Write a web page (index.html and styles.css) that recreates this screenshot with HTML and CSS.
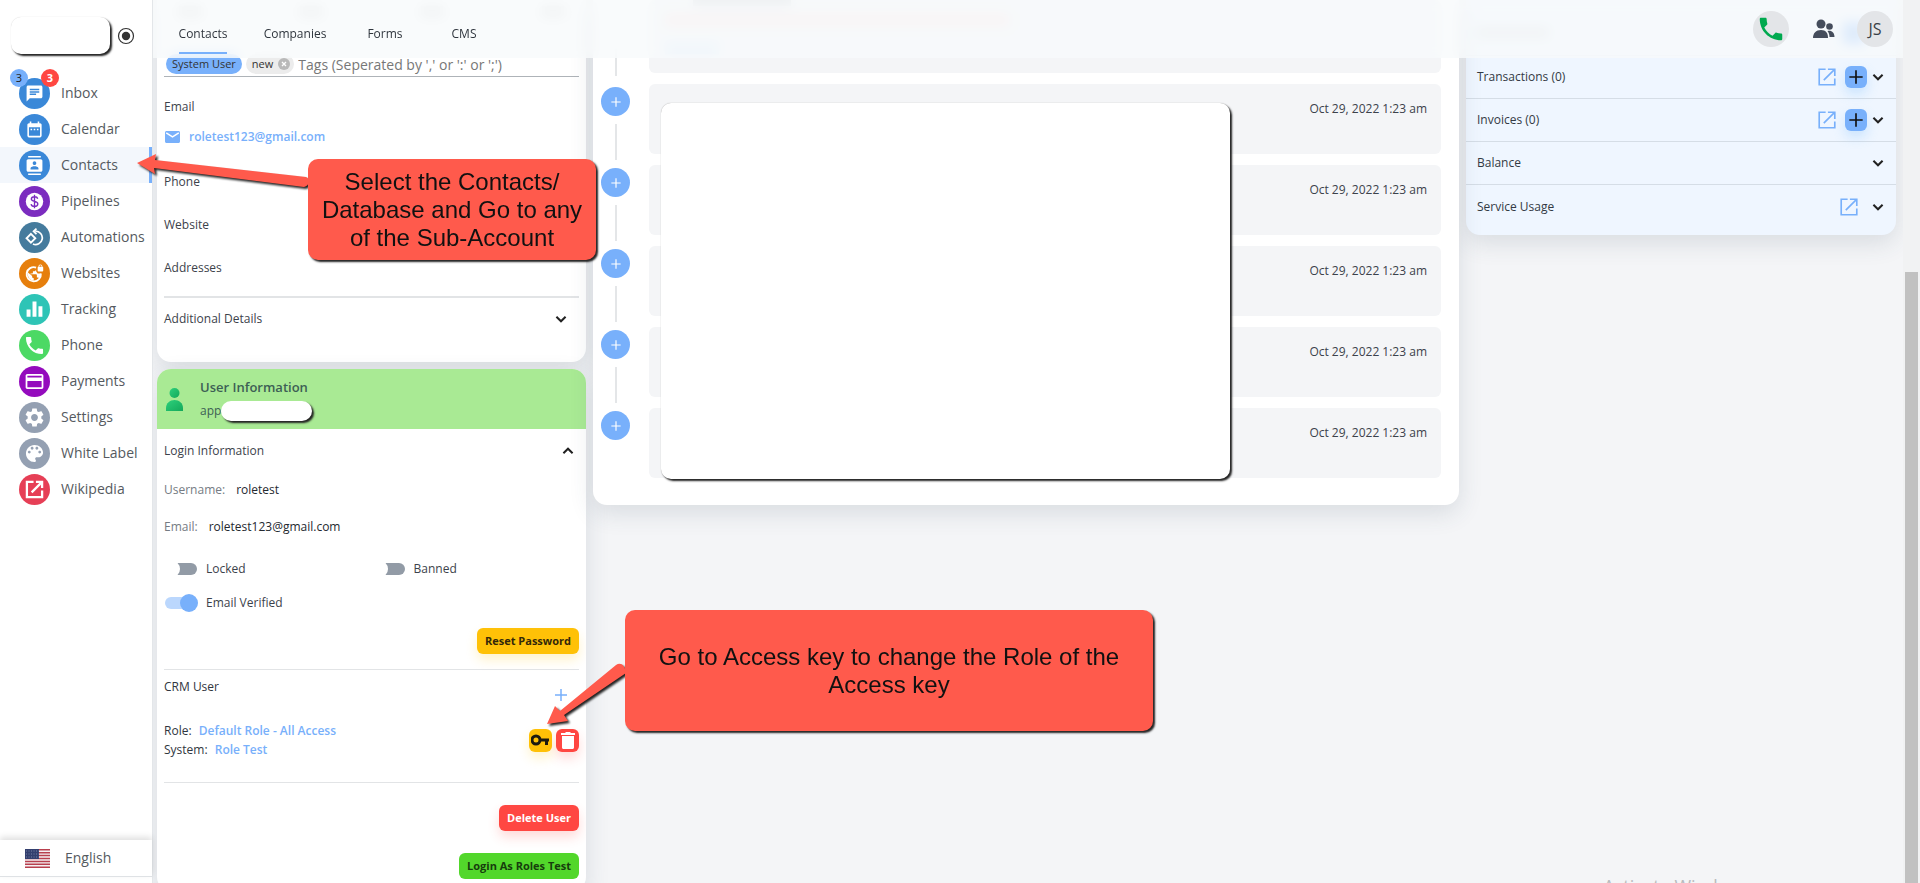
FILE: index.html
```html
<!DOCTYPE html>
<html lang="en">
<head>
    <title>Contacts</title>
    <meta charset="UTF-8">
    <link rel="stylesheet" href="styles.css">
</head>

<body>
    <!-- shared icons -->
    <svg class="defs" width="0" height="0">
        <symbol id="chevron" viewBox="0 0 24 24"><path d="M7 9.5l5 5 5-5" fill="none" stroke="currentColor" stroke-width="2.2"/></symbol>
        <symbol id="open" viewBox="0 0 24 24"><path d="M10.500 3.500H3.500v17h17v-7M13 3.500h7.500V11M20 4L8.500 15.500" fill="none" stroke="currentColor" stroke-width="1.800"/></symbol>
        <symbol id="plus" viewBox="0 0 24 24"><path d="M12 4v16M4 12h16" fill="none" stroke="currentColor" stroke-width="2"/></symbol>
        <symbol id="phone" viewBox="0 0 24 24"><path fill="currentColor" d="M6.620 10.790c1.440 2.830 3.760 5.140 6.590 6.590l2.200-2.200c.270-.270.670-.360 1.020-.240 1.120.370 2.330.570 3.570.570.550 0 1 .450 1 1V20c0 .550-.450 1-1 1-9.390 0-17-7.610-17-17 0-.550.450-1 1-1h3.500c.550 0 1 .450 1 1 0 1.250.200 2.450.570 3.570.110.350.030.740-.250 1.020l-2.200 2.200z"/></symbol>
    </svg>

    <aside class="sidebar">
        <div class="brand">
            <div class="brand-logo"></div>
            <svg width="18" height="18" viewBox="0 0 18 18"><circle cx="9" cy="9" r="7.500" fill="none" stroke="#333" stroke-width="1.200"/><circle cx="9" cy="9" r="4.200" fill="#333"/></svg>
        </div>
        <nav class="menu">
            <a href="#"><span class="ico blue"><svg viewBox="0 0 24 24"><path fill="#fff" d="M20 2H4c-1.100 0-2 .9-2 2v18l4-4h14c1.100 0 2-.9 2-2V4c0-1.100-.9-2-2-2zM6 9h12v2H6V9zm8 5H6v-2h8v2zm4-6H6V6h12v2z"/></svg><b class="badge left">3</b><b class="badge right">3</b></span>Inbox</a>
            <a href="#"><span class="ico blue"><svg viewBox="0 0 24 24"><path fill="#fff" d="M9 11H7v2h2v-2zm4 0h-2v2h2v-2zm4 0h-2v2h2v-2zm2-7h-1V2h-2v2H8V2H6v2H5c-1.100 0-2 .9-2 2v14c0 1.100.9 2 2 2h14c1.100 0 2-.9 2-2V6c0-1.100-.9-2-2-2zm0 16H5V9h14v11z"/></svg></span>Calendar</a>
            <a href="#" class="active"><span class="ico blue"><svg viewBox="0 0 24 24"><path fill="#fff" d="M20 0H4v2h16V0zM4 24h16v-2H4v2zM20 4H4c-1.100 0-2 .9-2 2v12c0 1.100.9 2 2 2h16c1.100 0 2-.9 2-2V6c0-1.100-.9-2-2-2zm-8 2.750c1.240 0 2.250 1.010 2.250 2.250s-1.010 2.250-2.250 2.250S9.750 10.240 9.750 9 10.760 6.750 12 6.750zM17 17H7v-1.500c0-1.670 3.330-2.500 5-2.500s5 .83 5 2.500V17z"/></svg></span>Contacts</a>
            <a href="#"><span class="ico purple"><svg viewBox="0 0 24 24"><circle cx="12" cy="12" r="11" fill="#fff"/><path d="M16 8.500c-.4-1.600-1.800-2.500-4-2.500-2.400 0-4 1-4 2.900 0 4.200 8.200 1.800 8.200 6.100 0 2-1.700 3.100-4.200 3.100-2.400 0-4-1.100-4.300-2.900M12 3.500v17" fill="none" stroke="#7b2cbf" stroke-width="1.700"/></svg></span>Pipelines</a>
            <a href="#"><span class="ico steel"><svg viewBox="0 0 24 24"><path d="M13 4a8.500 8.500 0 1 1-3 16.300M14.500.8L10.800 4.200l3.700 3.600" fill="none" stroke="#fff" stroke-width="2.200"/><path d="M7.500 7.500L13 13l-5.500 5.500L2 13z" fill="none" stroke="#fff" stroke-width="2.400"/></svg></span>Automations</a>
            <a href="#"><span class="ico orange"><svg viewBox="0 0 24 24"><path d="M14 4.500A9 9 0 1 0 20 12" fill="none" stroke="#fff" stroke-width="2.400"/><path fill="#fff" d="M3 10l6 5v2l2 1v3c-5 0-8-5-8-11zM14 5v2c0 1-1 2-2 2h-2v2c0 .6-.4 1-1 1H7v1h7c.6 0 1 .4 1 1v3h1c1 0 1.600.6 1.900 1.400L20 15v-3h-4l-2-3zM22 3.500V3a2.500 2.500 0 0 0-5 0v.5c-.6 0-1 .4-1 1v4c0 .6.400 1 1 1h5c.6 0 1-.4 1-1v-4c0-.6-.4-1-1-1zm-1 0h-3V3a1.500 1.500 0 0 1 3 0v.5z"/></svg></span>Websites</a>
            <a href="#"><span class="ico teal"><svg viewBox="0 0 24 24"><path fill="#fff" d="M2 12h5v9H2zM9.500 2h5v19h-5zM17 8h5v13h-5z"/></svg></span>Tracking</a>
            <a href="#"><span class="ico green"><svg viewBox="2 2 20 20"><use href="#phone" width="24" height="24"/></svg></span>Phone</a>
            <a href="#"><span class="ico violet"><svg viewBox="0 0 24 24"><path fill="#fff" d="M21 2.500H3c-1.300 0-2.200 1-2.200 2.200v14.600c0 1.200.9 2.200 2.200 2.200h18c1.300 0 2.200-1 2.200-2.200V4.700c0-1.200-.9-2.200-2.200-2.200zM21 19.300H3v-8h18v8zM21 7H3V4.700h18V7z"/></svg></span>Payments</a>
            <a href="#"><span class="ico grey"><svg viewBox="2 2 20 20"><path fill="#fff" d="M19.140 12.940c.040-.3.060-.610.060-.940 0-.320-.020-.640-.070-.940l2.030-1.580c.180-.140.230-.410.120-.610l-1.920-3.320c-.120-.220-.370-.290-.590-.220l-2.390.960c-.5-.380-1.030-.7-1.620-.940l-.360-2.540c-.040-.240-.240-.410-.480-.410h-3.840c-.240 0-.430.170-.470.410l-.360 2.540c-.590.240-1.130.570-1.620.940l-2.390-.960c-.220-.080-.470 0-.590.220L2.740 8.870c-.120.210-.080.470.120.610l2.030 1.580c-.050.3-.090.630-.090.940s.020.640.070.940l-2.030 1.580c-.180.140-.230.410-.120.610l1.920 3.320c.120.220.370.290.590.220l2.390-.960c.5.380 1.030.7 1.620.940l.36 2.540c.050.240.240.410.480.410h3.840c.240 0 .440-.170.470-.410l.36-2.540c.590-.240 1.130-.560 1.620-.940l2.390.960c.220.080.470 0 .590-.220l1.920-3.320c.120-.220.070-.470-.120-.610l-2.010-1.580zM12 15.600c-1.980 0-3.600-1.620-3.600-3.600s1.620-3.600 3.600-3.600 3.600 1.620 3.600 3.600-1.620 3.600-3.600 3.600z"/></svg></span>Settings</a>
            <a href="#"><span class="ico grey"><svg viewBox="2 2 20 20"><path fill="#fff" d="M12 3c-4.970 0-9 4.030-9 9s4.030 9 9 9c.83 0 1.500-.67 1.500-1.500 0-.39-.15-.74-.39-1.010-.23-.26-.38-.61-.38-.99 0-.83.67-1.500 1.500-1.500H16c2.760 0 5-2.240 5-5 0-4.420-4.030-8-9-8zm-5.500 9c-.83 0-1.500-.67-1.500-1.500S5.670 9 6.500 9 8 9.670 8 10.500 7.330 12 6.500 12zm3-4C8.670 8 8 7.330 8 6.500S8.670 5 9.500 5s1.500.67 1.500 1.500S10.330 8 9.500 8zm5 0c-.83 0-1.500-.67-1.500-1.500S13.670 5 14.500 5s1.500.67 1.500 1.500S15.330 8 14.500 8zm3 4c-.83 0-1.500-.67-1.500-1.500S16.670 9 17.500 9s1.500.67 1.500 1.500-.67 1.500-1.500 1.500z"/></svg></span>White Label</a>
            <a href="#"><span class="ico red"><svg viewBox="2 2 20 20"><path d="M11 4H4v16h16v-7M13.500 4H20v6.500M20 4L9 15" fill="none" stroke="#fff" stroke-width="2.400"/></svg></span>Wikipedia</a>
        </nav>
        <button class="language">
            <svg width="25" height="19" viewBox="0 0 25 19"><path fill="#f4f0f3" d="M0 0h25v19H0z"/><path d="M0 .750h25M0 3.650h25M0 6.550h25M0 9.500h25M0 12.400h25M0 15.300h25M0 18.250h25" stroke="#b8404e" stroke-width="1.500"/><path fill="#34406f" d="M0 0h14v10H0z"/><path d="M1 2h13M1 5h13M1 8h13" stroke="#7580a5" stroke-dasharray="1 1.500"/></svg>
            English
        </button>
    </aside>

    <div class="page">
        <header class="topbar">
            <nav class="tabs">
                <a href="#" class="active">Contacts</a>
                <a href="#">Companies</a>
                <a href="#">Forms</a>
                <a href="#">CMS</a>
            </nav>
            <div class="actions">
                <button class="call" aria-label="Call"><svg width="30" height="30"><use href="#phone"/></svg></button>
                <button class="people" aria-label="People"><svg width="22" height="20" viewBox="0 0 22 20"><g fill="#454d5c"><circle cx="8" cy="5" r="4.500"/><path d="M0 19c0-5 3-8 8-8s7 3 7 8z"/><circle cx="16.500" cy="7.500" r="3.300"/><path d="M14.500 12c4-1 7 1.500 7 6h-5c0-2-.5-4-2-6z"/></g></svg></button>
                <button class="avatar">JS</button>
            </div>
        </header>

        <main class="columns">
            <div class="col">
                <section class="card contact">
                    <div class="ghosts"><i></i><i></i><i></i><i></i></div>
                    <div class="tags">
                        <span class="tag system">System User</span>
                        <span class="tag">new<svg width="12" height="12" viewBox="0 0 12 12"><circle cx="6" cy="6" r="6" fill="#b9b9b9"/><path d="M4 4l4 4M8 4L4 8" stroke="#fff" stroke-width="1.300"/></svg></span>
                        <input type="text" aria-label="Tags" placeholder="Tags (Seperated by ',' or ':' or ';')">
                    </div>
                    <div class="field mail">
                        <div>Email</div>
                        <a href="#"><svg width="15" height="12" viewBox="0 0 15 12"><path fill="#78b0fb" d="M1.500 0h12c.8 0 1.500.7 1.500 1.500v9c0 .8-.7 1.500-1.500 1.500h-12C.7 12 0 11.300 0 10.500v-9C0 .7.700 0 1.500 0z"/><path d="M1.200 1.800l6.300 4 6.300-4" fill="none" stroke="#fff" stroke-width="1.500"/></svg>roletest123@gmail.com</a>
                    </div>
                    <div class="field">Phone</div>
                    <div class="field">Website</div>
                    <div class="field">Addresses</div>
                    <button class="expander">Additional Details<svg width="22" height="22"><use href="#chevron"/></svg></button>
                </section>

                <section class="card user">
                    <div class="user-head">
                        <svg width="17" height="23" viewBox="0 0 17 23"><defs><linearGradient id="person" x2="1" y2="1"><stop stop-color="#2dd07c"/><stop offset="1" stop-color="#13a95a"/></linearGradient></defs><circle cx="8.500" cy="5" r="5" fill="url(#person)"/><path d="M0 23v-3c0-5 4-8 8.500-8s8.500 3 8.500 8v3z" fill="url(#person)"/></svg>
                        <div>
                            <h2>User Information</h2>
                            <p>app<span class="mask"></span></p>
                        </div>
                    </div>
                    <div class="user-body">
                        <button class="login-title">Login Information<svg class="up" width="22" height="22"><use href="#chevron"/></svg></button>
                        <dl>
                            <div><dt>Username:</dt><dd>roletest</dd></div>
                            <div><dt>Email:</dt><dd>roletest123@gmail.com</dd></div>
                        </dl>
                        <div class="switches">
                            <label><input type="checkbox">Locked</label>
                            <label><input type="checkbox">Banned</label>
                            <label><input type="checkbox" checked>Email Verified</label>
                        </div>
                        <button class="btn yellow">Reset Password</button>
                        <div class="crm">
                            <div class="crm-title">CRM User<button aria-label="Add CRM user"><svg width="18" height="18"><use href="#plus"/></svg></button></div>
                            <div class="crm-row">
                                <div>
                                    <div class="role">Role: <a href="#">Default Role - All Access</a></div>
                                    <div>System: <a href="#">Role Test</a></div>
                                </div>
                                <button class="mini yellow" aria-label="Access key"><svg width="19" height="12" viewBox="0 0 19 12"><path d="M5 2a4 4 0 1 0 0 8 4 4 0 0 0 0-8zM9 6h9M15.500 6v5" fill="none" stroke="#1c1a10" stroke-width="3"/></svg></button>
                                <button class="mini red" aria-label="Delete"><svg width="14" height="17" viewBox="0 0 14 17"><path fill="#fff" d="M1 4h12v11.500c0 .8-.7 1.500-1.500 1.500h-9C1.700 17 1 16.300 1 15.500zM0 1h4l1-1h4l1 1h4v2H0z"/></svg></button>
                            </div>
                        </div>
                        <button class="btn red">Delete User</button>
                        <button class="btn green">Login As Roles Test</button>
                    </div>
                </section>
            </div>

            <section class="card timeline">
                <div class="entry first"><i class="smear dark"></i><i class="smear pink"></i><i class="smear sky"></i></div>
                <div class="entry"><button aria-label="Expand"><svg width="14" height="14"><use href="#plus"/></svg></button><time>Oct 29, 2022 1:23 am</time></div>
                <div class="entry"><button aria-label="Expand"><svg width="14" height="14"><use href="#plus"/></svg></button><time>Oct 29, 2022 1:23 am</time></div>
                <div class="entry"><button aria-label="Expand"><svg width="14" height="14"><use href="#plus"/></svg></button><time>Oct 29, 2022 1:23 am</time></div>
                <div class="entry"><button aria-label="Expand"><svg width="14" height="14"><use href="#plus"/></svg></button><time>Oct 29, 2022 1:23 am</time></div>
                <div class="entry"><button aria-label="Expand"><svg width="14" height="14"><use href="#plus"/></svg></button><time>Oct 29, 2022 1:23 am</time></div>
                <div class="cover"></div>
            </section>

            <section class="card billing">
                <div class="row ghost-row"><i></i><i></i></div>
                <div class="row"><span>Transactions (0)</span><a href="#" aria-label="Open"><svg width="22" height="22"><use href="#open"/></svg></a><button class="add" aria-label="Add"><svg width="20" height="20"><use href="#plus"/></svg></button><svg width="22" height="22"><use href="#chevron"/></svg></div>
                <div class="row"><span>Invoices (0)</span><a href="#" aria-label="Open"><svg width="22" height="22"><use href="#open"/></svg></a><button class="add" aria-label="Add"><svg width="20" height="20"><use href="#plus"/></svg></button><svg width="22" height="22"><use href="#chevron"/></svg></div>
                <div class="row"><span>Balance</span><svg width="22" height="22"><use href="#chevron"/></svg></div>
                <div class="row last"><span>Service Usage</span><a href="#" aria-label="Open"><svg width="22" height="22"><use href="#open"/></svg></a><svg width="22" height="22"><use href="#chevron"/></svg></div>
            </section>
        </main>
        <div class="watermark">Activate Windows</div>
    </div>

    <div class="scrollbar"><div class="thumb"></div></div>

    <!-- callouts drawn over the page -->
    <svg class="arrows" width="640" height="740">
        <path d="M137 163l19-9-1 6 151 17c4 1 4 9-2 10L154 168l1 6z"/>
        <path d="M547 724l8-18 5 5 56-46c4-3 9-1 10 8l-62 42 4 6z"/>
    </svg>
    <div class="callout one">Select the Contacts/<br>Database and Go to any<br>of the Sub-Account</div>
    <div class="callout two">Go to Access key to change the Role of the Access key</div>
</body>

</html>
```
FILE: styles.css
```css
* {
    box-sizing: border-box;
}

body {
    margin: 0;
    height: 100vh;
    display: flex;
    position: relative;
    overflow: hidden;
    background: #f4f5f7;
    color: #3c424b;
    font-family: "Open Sans", "Noto Sans", sans-serif;
    font-size: 12px;
    line-height: 20px;
}

a {
    color: #78b0fb;
    text-decoration: none;
}

button {
    border: 0;
    padding: 0;
    background: none;
    color: inherit;
    font: inherit;
}

h2, p, dl, dd {
    margin: 0;
}

svg {
    flex: none;
    display: block;
}

.defs {
    position: absolute;
}

/* sidebar */
.sidebar {
    flex: none;
    width: 153px;
    display: flex;
    flex-direction: column;
    background: #fff;
    border-right: 1px solid #e3e6e9;
}

.brand {
    display: flex;
    align-items: center;
    gap: 7px;
    padding: 17px 0 0 11px;
}

.brand-logo {
    width: 99px;
    height: 37px;
    border-radius: 10px;
    background: #fff;
    box-shadow: 2px 2px 2px #222, 0 0 1px #ccc;
}

.menu {
    padding-top: 21px;
}

.menu a {
    display: flex;
    align-items: center;
    gap: 11px;
    height: 36px;
    padding-left: 19px;
    color: #555a60;
    font-size: 14px;
}

.menu .active {
    background: #f3f7fc;
    border-right: 3px solid #78b0fb;
}

.ico {
    position: relative;
    width: 31px;
    height: 31px;
    display: flex;
    align-items: center;
    justify-content: center;
    border-radius: 50%;
    color: #fff;
}

.ico svg {
    width: 19px;
    height: 19px;
}

.blue { background: #3a88d8; }
.purple { background: #7b2cbf; }
.steel { background: #457b9d; }
.orange { background: #e67f0d; }
.teal { background: #2ec4b6; }
.ico.green { background: #4cd964; }
.violet { background: #940bbd; }
.grey { background: #94a0b2; }
.ico.red { background: #e63f56; }

.badge {
    position: absolute;
    top: -9px;
    width: 18px;
    height: 18px;
    border-radius: 50%;
    font-size: 11px;
    line-height: 18px;
    text-align: center;
}

.badge.left {
    left: -9px;
    background: #78b0fb;
    color: #222;
    font-weight: 400;
}

.badge.right {
    right: -9px;
    background: #ff4742;
    color: #fff;
}

.language {
    display: flex;
    align-items: center;
    gap: 15px;
    height: 37px;
    margin-top: auto;
    margin-bottom: 6px;
    padding-left: 25px;
    border-bottom: 1px solid #dfe2e5;
    box-shadow: 0 -3px 6px rgba(0, 0, 0, 0.12);
    color: #555a60;
    font-size: 14px;
}

/* page */
.page {
    position: relative;
    flex: 1;
    min-width: 0;
    overflow: hidden;
}

.topbar {
    position: relative;
    z-index: 2;
    display: flex;
    justify-content: space-between;
    height: 58px;
    margin-bottom: -58px;
    background: rgba(248, 250, 251, 0.8);
    backdrop-filter: blur(6px);
}

.tabs {
    display: grid;
    grid-template-columns: 100px 84px 96px 62px;
    justify-items: center;
}

.tabs a {
    height: 54px;
    padding-top: 24px;
    color: #30363e;
    font-weight: 500;
    border-bottom: 2px solid transparent;
}

.tabs .active {
    border-color: #78b0fb;
}

.actions {
    display: flex;
    align-items: center;
    padding-right: 10px;
}

.call, .avatar {
    width: 36px;
    height: 36px;
    display: flex;
    align-items: center;
    justify-content: center;
    border-radius: 50%;
    background: #e3e5e8;
    color: #3a3f46;
    font-size: 16px;
}

.call {
    color: #00a94f;
}

.people {
    margin: 0 22px 0 24px;
}

.columns {
    display: grid;
    grid-template-columns: 429fr 866fr 430fr;
    gap: 7px;
    align-items: start;
    padding: 0 7px 0 4px;
}

.card {
    background: #fff;
    border-radius: 0 0 14px 14px;
    box-shadow: 0 8px 24px rgba(50, 70, 90, 0.14);
}

.contact {
    padding: 0 7px 22px;
}

.ghosts {
    display: flex;
    justify-content: space-between;
    height: 52px;
    padding: 6px 14px 0;
}

.ghosts i {
    width: 24px;
    height: 12px;
    background: #ddd;
}

.tags {
    display: flex;
    align-items: center;
    gap: 4px;
    height: 25px;
    padding: 0 2px;
    border-bottom: 1px solid #aeb3b8;
}

.tag {
    display: flex;
    align-items: center;
    gap: 5px;
    height: 20px;
    padding: 0 4px 0 6px;
    border-radius: 10px;
    background: #ececec;
    color: #333;
    font-size: 11px;
}

.tag.system {
    padding: 0 6px;
    background: #78b0fb;
}

.tags input {
    flex: 1;
    min-width: 0;
    padding: 0;
    border: 0;
    background: none;
    color: #777;
    font: 14px "Open Sans", sans-serif;
}

.tags input::placeholder {
    color: #777;
}

.field {
    height: 43px;
}

.field.mail {
    height: 95px;
    padding-top: 20px;
}

.mail a {
    display: flex;
    align-items: center;
    gap: 9px;
    margin: 10px 0 0 1px;
    font-weight: 600;
}

.expander, .login-title {
    width: 100%;
    display: flex;
    align-items: center;
    justify-content: space-between;
}

.expander {
    height: 44px;
    padding-right: 7px;
    margin-top: -5px;
    border-top: 2px solid #e2e4e6;
}

.login-title {
    height: 20px;
    font-weight: 500;
}

.expander svg, .up {
    color: #222;
}

.up {
    transform: rotate(180deg);
}

.user {
    margin-top: 7px;
    border-radius: 14px;
    overflow: hidden;
}

.user-head {
    display: flex;
    align-items: center;
    gap: 17px;
    height: 60px;
    padding-left: 9px;
    background: #a9ea94;
    color: #3d5f55;
}

.user-head h2 {
    margin-bottom: 4px;
    font-size: 13px;
    line-height: 20px;
    font-weight: 600;
}

.user-head p {
    display: flex;
    align-items: center;
}

.mask {
    width: 91px;
    height: 20px;
    border-radius: 10px;
    background: #fff;
    box-shadow: 2px 2px 2px #222;
}

.user-body {
    display: flex;
    flex-direction: column;
    align-items: flex-end;
    padding: 12px 7px;
}

dl {
    width: 100%;
    padding-top: 19px;
}

dl div {
    display: flex;
    gap: 11px;
    margin-bottom: 17px;
}

dt {
    color: #757b83;
}

dd {
    color: #24292f;
    font-weight: 500;
}

.switches {
    width: 100%;
    display: grid;
    grid-template-columns: 1fr 1fr;
    row-gap: 14px;
    padding: 5px 0 15px;
}

.switches label {
    display: flex;
    align-items: center;
    gap: 8px;
}

.switches input {
    appearance: none;
    position: relative;
    width: 32px;
    height: 12px;
    margin: 0 1px;
    border-radius: 6px;
    background: #929ba6;
}

.switches input::after {
    content: "";
    position: absolute;
    top: -3px;
    left: -3px;
    width: 18px;
    height: 18px;
    border-radius: 50%;
    background: #fff;
}

.switches input:checked {
    background: #bbd7fd;
}

.switches input:checked::after {
    left: 15px;
    background: #78b0fb;
}

.btn {
    height: 26px;
    padding: 0 8px;
    border-radius: 6px;
    font-size: 11px;
    font-weight: 700;
}

.btn.yellow, .mini.yellow {
    background: #ffc107;
    color: #33270a;
    box-shadow: 0 6px 12px rgba(255, 193, 7, 0.2);
}

.btn.red, .mini.red {
    background: #ff4742;
    color: #fff;
    box-shadow: 0 6px 12px rgba(255, 71, 66, 0.2);
}

.btn.green {
    margin-top: 22px;
    background: #52d72b;
    color: #173d0d;
}

.crm {
    width: 100%;
    height: 114px;
    margin: 15px 0 22px;
    padding-top: 7px;
    border-top: 1px solid #e2e4e6;
    border-bottom: 1px solid #e2e4e6;
    color: #30363e;
}

.crm-title {
    display: flex;
    align-items: flex-start;
    justify-content: space-between;
    height: 44px;
    padding-right: 9px;
    font-weight: 500;
}

.crm-title button {
    margin-top: 9px;
    color: #78b0fb;
}

.crm-row {
    display: flex;
    align-items: center;
    gap: 4px;
    line-height: 19px;
}

.crm-row > div {
    flex: 1;
}

.crm-row a {
    margin-left: 4px;
    font-weight: 600;
}

.mini {
    width: 23px;
    height: 23px;
    display: flex;
    align-items: center;
    justify-content: center;
    border-radius: 6px;
}

/* timeline */
.timeline {
    position: relative;
    padding: 0 18px 27px 56px;
}

.entry {
    position: relative;
    display: flex;
    justify-content: flex-end;
    height: 70px;
    margin-bottom: 11px;
    padding: 15px 14px 0 0;
    border-radius: 6px;
    background: #f4f5f7;
}

.entry:nth-last-child(2) {
    margin-bottom: 0;
}

.entry.first {
    height: 73px;
}

.entry button {
    position: absolute;
    left: -48px;
    top: 3px;
    width: 29px;
    height: 29px;
    display: flex;
    align-items: center;
    justify-content: center;
    border-radius: 50%;
    background: #78b0fb;
    color: #fff;
}

/* connector between the round buttons */
.entry::before {
    content: "";
    position: absolute;
    left: -34px;
    top: 40px;
    width: 2px;
    height: 36px;
    background: #e4e6e8;
}

.entry:nth-last-child(2)::before {
    display: none;
}

.smear {
    position: absolute;
    left: 16px;
    height: 12px;
}

.smear.dark { top: -6px; left: 44px; width: 98px; background: #c9ccd0; }
.smear.pink { top: 14px; width: 344px; background: #fbdcdc; }
.smear.sky { top: 42px; width: 54px; background: #d5e8fb; }

.cover {
    position: absolute;
    top: 103px;
    left: 68px;
    right: 229px;
    bottom: 26px;
    border-radius: 10px;
    background: #fff;
    box-shadow: 2px 2px 2px #222, 0 0 1px #999;
}

/* right column */
.billing {
    background: #eff6ff;
}

.row {
    display: flex;
    align-items: center;
    height: 43px;
    padding: 0 7px 0 11px;
    border-bottom: 1px solid #d5dde6;
    color: #333a44;
}

.row > svg {
    color: #222;
}

.row > span {
    flex: 1;
}

.row a {
    margin-right: 7px;
}

.row.last {
    height: 50px;
    padding-bottom: 6px;
    border: 0;
}

.row.ghost-row {
    height: 56px;
    justify-content: space-between;
    padding-top: 10px;
    padding-right: 31px;
}

.ghost-row i {
    width: 72px;
    height: 11px;
    background: #d5d8dc;
}

.ghost-row i + i {
    width: 22px;
    height: 22px;
    background: #78b0fb;
}

.add {
    width: 22px;
    height: 22px;
    display: flex;
    align-items: center;
    justify-content: center;
    border-radius: 6px;
    background: #78b0fb;
    color: #111;
    box-shadow: 0 6px 12px rgba(120, 190, 251, 0.3);
}

.watermark {
    position: absolute;
    right: 152px;
    bottom: -15px;
    color: #b9bbbd;
    font-size: 18px;
    line-height: 24px;
}

.scrollbar {
    flex: none;
    width: 17px;
    padding: 272px 2px 0;
    background: #f1f2f3;
}

.thumb {
    height: 100%;
    background: #c1c1c1;
}

/* callouts */
.arrows {
    position: absolute;
    top: 0;
    left: 0;
    z-index: 3;
    fill: #ff5a4c;
    filter: drop-shadow(2px 2px 1px #222);
    pointer-events: none;
}

.callout {
    position: absolute;
    z-index: 4;
    display: flex;
    align-items: center;
    justify-content: center;
    border-radius: 10px;
    background: #ff5a4c;
    box-shadow: 2px 2px 2px #222;
    color: #111;
    font: 24px/28px "Liberation Sans", sans-serif;
    text-align: center;
}

.callout.one {
    top: 159px;
    left: 308px;
    width: 288px;
    height: 101px;
}

.callout.two {
    top: 610px;
    left: 625px;
    width: 528px;
    height: 121px;
    padding: 0 30px;
}
```
